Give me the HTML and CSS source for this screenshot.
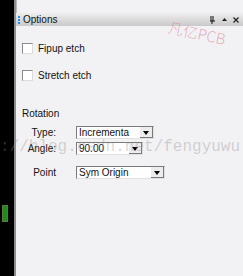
FILE: index.html
```html
<!DOCTYPE html>
<html lang="en">
<head>
    <meta charset="UTF-8">
    <title>Options</title>
    <link rel="stylesheet" href="styles.css">
</head>
<body>
    <div class="app">
        <div class="canvas-strip">
            <div class="pad"></div>
        </div>
        <div class="panel">
            <div class="panel-top"></div>
            <div class="titlebar">
                <span class="grip"></span>
                <span class="title">Options</span>
                <span class="tb-btns">
                    <svg width="7" height="8" viewBox="0 0 7 8"><path d="M2 0v5M4 0v5M1 5h5M3 5v3" stroke="#111" fill="none"/></svg>
                    <svg width="5" height="3" viewBox="0 0 5 3"><path d="M0 3L2.5 0L5 3Z" fill="#222"/></svg>
                    <svg width="6" height="6" viewBox="0 0 6 6"><path d="M0.5 0.5L5.5 5.5M5.5 0.5L0.5 5.5" stroke="#222" stroke-width="1.2"/></svg>
                </span>
            </div>
            <div class="content">
                <label class="check"><span class="box"></span>Fipup etch</label>
                <label class="check"><span class="box"></span>Stretch etch</label>
                <div class="group-title">Rotation</div>
                <div class="fields">
                    <div class="row">
                        <span class="lbl">Type:</span>
                        <div class="combo w78"><span class="val">Incrementa</span><span class="arrow"></span></div>
                    </div>
                    <div class="row">
                        <span class="lbl">Angle:</span>
                        <div class="combo w67"><span class="val">90.00</span><span class="arrow"></span></div>
                    </div>
                    <div class="row row-gap">
                        <span class="lbl">Point</span>
                        <div class="combo w90"><span class="val">Sym Origin</span><span class="arrow"></span></div>
                    </div>
                </div>
            </div>
            <div class="wm-cn">凡亿PCB</div>
        </div>
    </div>
    <div class="wm-url">://blog.csdn.net/fengyuwu</div>
</body>
</html>
```

FILE: styles.css
```css
html, body {
    margin: 0;
    padding: 0;
    width: 243px;
    height: 276px;
    overflow: hidden;
    background: #000;
}

body {
    position: relative;
}

.app {
    display: flex;
    height: 276px;
    font-family: "Liberation Sans", Arial, sans-serif;
    font-size: 10px;
    color: #111;
}

.canvas-strip {
    width: 14px;
    background: #000;
    padding-top: 205px;
    box-sizing: border-box;
}

.pad {
    width: 6px;
    height: 17px;
    margin-left: 2px;
    background: #1d8a1d;
    border: 1px solid #5a7a3a;
    box-sizing: border-box;
}

.panel {
    position: relative;
    flex: 1;
    background: #f2f1f4;
    border-left: 2px solid #8e8e8e;
    overflow: hidden;
}

.panel-top {
    height: 13px;
    border-left: 1px solid #b8b8b8;
}

.titlebar {
    display: flex;
    align-items: center;
    height: 13px;
    background: linear-gradient(#eeeeee, #c9c9c9);
    padding-left: 2px;
}

.grip {
    width: 2px;
    height: 8px;
    background: repeating-linear-gradient(#1f8ff0 0 2px, transparent 2px 3px);
    margin-right: 3px;
}

.title {
    flex: 1;
}

.tb-btns {
    display: flex;
    align-items: center;
    gap: 6px;
    padding-right: 4px;
}

.content {
    padding: 17px 0 0 6px;
}

.check {
    display: flex;
    align-items: center;
    gap: 5px;
    height: 10px;
    margin-bottom: 17px;
}

.box {
    width: 9px;
    height: 9px;
    background: #fff;
    border: 1px solid #8a8a8a;
    border-right-color: #dcdcdc;
    border-bottom-color: #dcdcdc;
}

.group-title {
    margin-top: 28px;
}

.fields {
    display: flex;
    flex-direction: column;
    gap: 3px;
    margin-top: 7px;
}

.row {
    display: flex;
    align-items: center;
    gap: 20px;
}

.row-gap {
    margin-top: 8px;
}

.lbl {
    width: 34px;
    text-align: right;
}

.combo {
    display: flex;
    align-items: center;
    height: 13px;
    background: #fff;
    border: 1px solid #7a7a7a;
    border-right-color: #e0e0e0;
    border-bottom-color: #e0e0e0;
    box-sizing: border-box;
}

.w78 { width: 78px; }
.w67 { width: 67px; }
.w90 { width: 89px; }

.val {
    flex: 1;
    padding-left: 2px;
    line-height: 11px;
}

.arrow {
    width: 13px;
    height: 11px;
    background: #ececec;
    border-left: 1px solid #fff;
    box-shadow: inset -1px -1px 0 #7a7a7a;
    position: relative;
}

.arrow::after {
    content: "";
    position: absolute;
    left: 3px;
    top: 4px;
    border-left: 3px solid transparent;
    border-right: 3px solid transparent;
    border-top: 4px solid #000;
}

.wm-cn {
    position: absolute;
    left: 152px;
    top: 22px;
    font-family: "Noto Sans CJK SC", sans-serif;
    font-size: 15px;
    font-weight: 300;
    color: rgba(215, 110, 140, 0.55);
    transform: rotate(12deg);
}

.wm-url {
    position: absolute;
    left: 0;
    top: 138px;
    font-family: "Liberation Mono", monospace;
    font-size: 16px;
    color: rgba(140, 140, 140, 0.35);
    white-space: nowrap;
    pointer-events: none;
}
```
